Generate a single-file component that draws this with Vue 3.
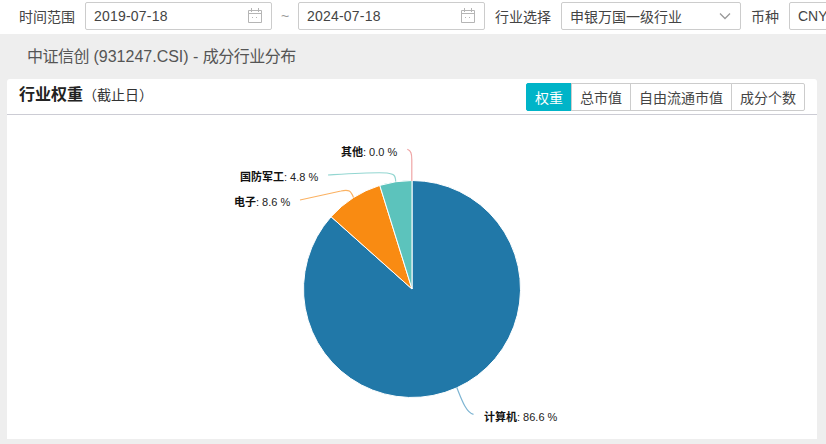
<script setup>
const cx = 412
const cy = 289
const r = 108.5
const data = [
  { name: '计算机', pct: 86.6, color: '#2178a8' },
  { name: '电子', pct: 8.6, color: '#f98b12' },
  { name: '国防军工', pct: 4.8, color: '#5cc3bc' },
]
let acc = 0
const point = (p) => {
  const a = (p / 100) * Math.PI * 2
  return `${(cx + r * Math.sin(a)).toFixed(2)} ${(cy - r * Math.cos(a)).toFixed(2)}`
}
const slices = data.map((d) => {
  const from = acc
  acc += d.pct
  const large = d.pct > 50 ? 1 : 0
  return { ...d, d: `M${cx} ${cy}L${point(from)}A${r} ${r} 0 ${large} 1 ${point(acc)}Z` }
})
const leaders = [
  { color: '#7db4d2', d: 'M456.7 387.3C461 398 466 413 473.5 414.3' },
  { color: '#fbb263', d: 'M300 200L341 191C349 189 351 191 353.5 197.5' },
  { color: '#93d6d1', d: 'M328 175C345 174 375 172 387 173C394 174 395.5 175 395.7 181.5' },
  { color: '#efa5a5', d: 'M407.3 149.3C411 151 411.8 153 411.8 160L411.8 181' },
]
const labels = [
  { name: '其他', val: '0.0 %', x: 341, y: 156 },
  { name: '国防军工', val: '4.8 %', x: 240, y: 181 },
  { name: '电子', val: '8.6 %', x: 234, y: 206 },
  { name: '计算机', val: '86.6 %', x: 484, y: 421 },
]
const tabs = ['权重', '总市值', '自由流通市值', '成分个数']
</script>

<template>
  <div class="page">
    <div class="filters">
      <span class="lab">时间范围</span>
      <div class="field date">
        <span>2019-07-18</span>
        <svg class="cal" width="16" height="16" viewBox="0 0 16 16" fill="none" stroke="#b5b5b5">
          <path d="M1.5 3.5h13v12h-13zM1.5 6.5h13M4.5 1v4M11.5 1v4" />
          <path d="M5 10.5h1M9 10.5h1" />
        </svg>
      </div>
      <span class="tilde">~</span>
      <div class="field date">
        <span>2024-07-18</span>
        <svg class="cal" width="16" height="16" viewBox="0 0 16 16" fill="none" stroke="#b5b5b5">
          <path d="M1.5 3.5h13v12h-13zM1.5 6.5h13M4.5 1v4M11.5 1v4" />
          <path d="M5 10.5h1M9 10.5h1" />
        </svg>
      </div>
      <span class="lab">行业选择</span>
      <div class="field sel">
        <span>申银万国一级行业</span>
        <svg width="12" height="8" viewBox="0 0 12 8" fill="none" stroke="#999" stroke-width="1.3">
          <path d="M1 1.5l5 5 5-5" />
        </svg>
      </div>
      <span class="lab short">币种</span>
      <div class="field cur"><span>CNY</span></div>
    </div>

    <div class="heading"><span class="tight">中证信创</span> (931247.CSI) - <span class="tight">成分行业分布</span></div>

    <section class="card">
      <header class="card-head">
        <div class="card-title"><b>行业权重</b><small>（截止日）</small></div>
        <div class="tabs">
          <button v-for="(t, i) in tabs" :key="t" class="tab" :class="{ on: i === 0 }">{{ t }}</button>
        </div>
      </header>
      <svg class="chart" width="810" height="324" viewBox="7 115 810 324">
        <path v-for="s in slices" :key="s.name" :d="s.d" :fill="s.color" stroke="#fff" stroke-width="1" />
        <path v-for="l in leaders" :key="l.d" :d="l.d" :stroke="l.color" stroke-width="1.2" fill="none" />
        <text v-for="l in labels" :key="l.name" :x="l.x" :y="l.y" class="pie-label">
          <tspan class="pie-name">{{ l.name }}</tspan><tspan>: {{ l.val }}</tspan>
        </text>
      </svg>
    </section>
  </div>
</template>

<style scoped>
.page {
  width: 826px;
  height: 444px;
  overflow: hidden;
  background: #eeeeee;
  font-family: "Liberation Sans", "Noto Sans CJK SC", sans-serif;
  color: #444;
}
.filters {
  height: 34px;
  box-sizing: border-box;
  padding: 2px 0 4px 19px;
  background: #fff;
  display: flex;
  align-items: center;
  white-space: nowrap;
  font-size: 14px;
  overflow: hidden;
}
.lab {
  width: 56px;
  margin-right: 10px;
  flex: none;
}
.lab.short {
  width: 28px;
}
.field {
  height: 28px;
  box-sizing: border-box;
  border: 1px solid #ccc;
  border-radius: 2px;
  display: flex;
  align-items: center;
  justify-content: space-between;
  padding: 0 8px;
  flex: none;
  margin-right: 10px;
  background: #fff;
}
.date {
  width: 187px;
  letter-spacing: 0.2px;
}
.cal {
  margin-top: -3px;
}
.sel {
  width: 180px;
  padding-right: 9px;
}
.cur {
  width: 60px;
  margin-right: 0;
}
.tilde {
  width: 26px;
  margin-left: -10px;
  text-align: center;
  color: #999;
  flex: none;
}
.heading {
  height: 45px;
  box-sizing: border-box;
  padding: 12px 0 0 27px;
  font-size: 16px;
  line-height: 22px;
  color: #555;
}
.tight {
  letter-spacing: -0.5px;
}
.card {
  width: 810px;
  height: 360px;
  margin-left: 7px;
  background: #fff;
  border-radius: 3px 3px 0 0;
  overflow: hidden;
}
.card-head {
  height: 36px;
  box-sizing: border-box;
  border-bottom: 1px solid #ccccd4;
  display: flex;
  align-items: flex-start;
  justify-content: space-between;
  padding: 4px 12px 0 12px;
}
.card-title {
  margin-top: 1px;
  line-height: 22px;
  color: #222;
}
.card-title b {
  font-size: 16px;
}
.card-title small {
  font-size: 14px;
  color: #333;
}
.tabs {
  display: flex;
}
.tab {
  height: 28px;
  padding: 0 8px;
  margin: 0 0 0 -1px;
  font: 14px "Liberation Sans", "Noto Sans CJK SC", sans-serif;
  color: #444;
  background: #fff;
  border: 1px solid #ccc;
  white-space: nowrap;
}
.tab:first-child {
  border-radius: 2px 0 0 2px;
}
.tab:last-child {
  border-radius: 0 2px 2px 0;
}
.tab.on {
  background: #00b4c8;
  border-color: #00b4c8;
  color: #fff;
}
.chart {
  display: block;
}
.pie-label {
  font-size: 11px;
  fill: #222;
}
.pie-name {
  font-weight: 700;
  fill: #111;
}
</style>

<style>
html, body {
  margin: 0;
  overflow: hidden;
}
</style>
